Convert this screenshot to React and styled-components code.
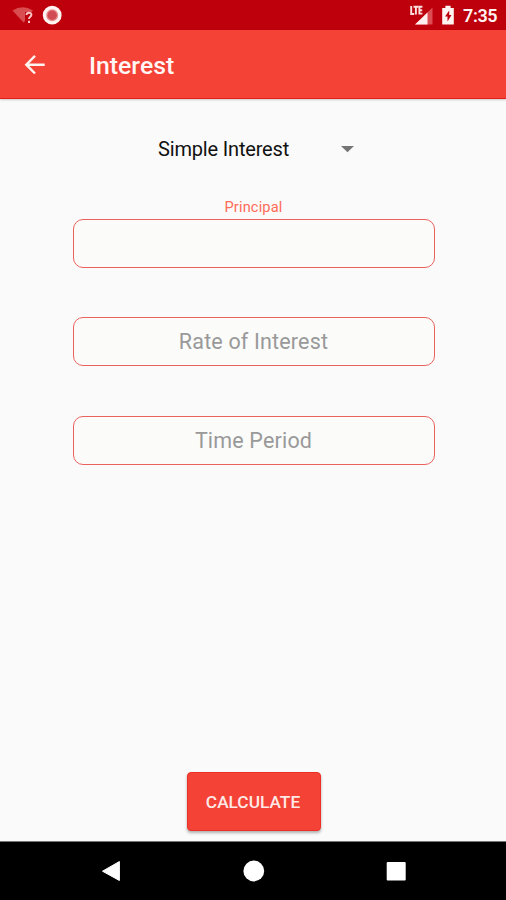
import React from 'react';
import styled, { createGlobalStyle } from 'styled-components';

const GlobalStyle = createGlobalStyle`
  * { box-sizing: border-box; }
  body { margin: 0; background: #fafafa; font-family: Roboto, "Liberation Sans", sans-serif; }
`;

const Screen = styled.div`
  display: flex;
  flex-direction: column;
  width: 506px;
  height: 900px;
  overflow: hidden;
  background: #fafafa;
`;

const StatusBar = styled.header`
  display: flex;
  justify-content: space-between;
  flex: 0 0 30px;
  background: #bd000c;
`;

const StatusGroup = styled.div`
  display: flex;
  height: 30px;
`;

const Clock = styled.span`
  width: 43px;
  color: #fff3f2;
  font-size: 18px;
  font-weight: 600;
  line-height: 32px;
  letter-spacing: -0.4px;
  white-space: nowrap;
`;

const AppBar = styled.div`
  display: flex;
  align-items: center;
  flex: 0 0 69px;
  padding: 2px 0 0 22px;
  background: #f44336;
  border-bottom: 1px solid #e01e17;
  box-shadow: 0 1px 2px rgba(0, 0, 0, 0.2);
  z-index: 1;
`;

const BackButton = styled.button`
  display: flex;
  width: 67px;
  padding: 0;
  border: 0;
  background: none;
`;

const Title = styled.h1`
  margin: 2px 0 0;
  color: #fff6f5;
  font-size: 24.8px;
  font-weight: 500;
  line-height: 32px;
`;

const Form = styled.main`
  display: flex;
  flex-direction: column;
  align-items: center;
  flex: 1;
`;

const Picker = styled.div`
  display: flex;
  align-items: center;
  justify-content: space-between;
  width: 196px;
  height: 30px;
  margin: 35px 0 0 6px;
  color: #111;
  font-size: 20px;
  letter-spacing: -0.17px;
  white-space: nowrap;
`;

const Field = styled.label`
  display: flex;
  flex-direction: column;
  width: 362px;
  height: 98.3px;
`;

const Fields = styled.div`
  padding: 34px 0 0 1px;
`;

const Label = styled.span`
  height: 21px;
  color: #ff6b57;
  font-size: 14.6px;
  line-height: 18px;
  letter-spacing: 0.15px;
  text-align: center;
`;

const Input = styled.input`
  width: 100%;
  height: 49px;
  padding: 0;
  border: 1.4px solid #eb625d;
  border-radius: 10px;
  outline: 0;
  background: #fbfbfa;
  font: 21.5px Roboto, "Liberation Sans", sans-serif;
  letter-spacing: 0.17px;
  text-align: center;

  &::placeholder { color: #999; opacity: 1; }
`;

const Calculate = styled.button`
  width: 134px;
  height: 59px;
  margin: auto 0 10px 1px;
  padding: 1px 1px 0 0;
  border: 1px solid #ed2f25;
  border-radius: 4px;
  background: #f44336;
  box-shadow: 0 2px 3px rgba(0, 0, 0, 0.3);
  color: #ffe9e6;
  font: 500 17.3px Roboto, "Liberation Sans", sans-serif;
`;

const NavBar = styled.nav`
  display: flex;
  justify-content: space-between;
  flex: 0 0 59px;
  padding: 15px 96px 0 97px;
  border-top: 1px solid #777;
  background: #000;
`;

const NavButton = styled.button`
  display: flex;
  width: 28px;
  height: 28px;
  padding: 0;
  border: 0;
  background: none;
`;

const shapes = {
  back: <path d="M5.5 14.2 22.4 4.5v19Z" fill="#fff" stroke="#fff" strokeWidth="1" strokeLinejoin="round" />,
  home: <circle cx="13.8" cy="14" r="10.4" fill="#fff" />,
  recent: <rect x="4.7" y="5" width="19" height="18.5" rx="1" fill="#fff" />,
};

export default function App() {
  return (
    <>
      <GlobalStyle />
      <Screen>
        <StatusBar>
          <StatusGroup>
            <svg width="66" height="30" viewBox="0 0 66 30">
              <path d="M12.5 10.5Q22.5 4 33 10.5L31.5 12H25v9l-1.5 1.5Z" fill="#d94c50" />
              <path d="M26.5 15c.2-3 5-2.8 4.9-.2 0 2-2.4 2-2.4 4.2M29 20.8v2.2" fill="none" stroke="#f6c5c4" strokeWidth="2" />
              <circle cx="52.2" cy="15.2" r="7.7" fill="#e88c8f" stroke="#fff4f2" strokeWidth="3.4" />
              <circle cx="52.2" cy="15.2" r="4.7" fill="#d14a54" />
            </svg>
          </StatusGroup>
          <StatusGroup>
            <svg width="53" height="30" viewBox="0 0 53 30">
              <path d="M22.5 7.5v17H5Z" fill="#db4d53" />
              <path d="M17.5 12.5v12H5Z" fill="#fff0ef" />
              <path d="M1.2 6v8h3M3.5 6.8h4.8M5.9 6.8v7.6M12.4 6.8H9.4v6.8h3M9.4 10.2h2.8" fill="none" stroke="#fbdedd" strokeWidth="1.9" />
              <path d="M32.2 8h3.2V5.7h5.2V8h3.2v16.5H32.2Z" fill="#fff4f2" />
              <path d="m39.2 10.5-4.2 6H37.5v5l4-6.5H39.2Z" fill="#bd000c" />
            </svg>
            <Clock>7:35</Clock>
          </StatusGroup>
        </StatusBar>
        <AppBar>
          <BackButton aria-label="Back">
            <svg width="26" height="26" viewBox="0 0 26 26">
              <path d="M22.7 12.7H4.5M13 3.9 4.3 12.7 13 21.5" fill="none" stroke="#fff3ef" strokeWidth="2.4" />
            </svg>
          </BackButton>
          <Title>Interest</Title>
        </AppBar>
        <Form>
          <Picker>
            Simple Interest
            <svg width="13" height="8" viewBox="0 0 13 8">
              <path d="M0 1h13L6.5 7.3Z" fill="#757575" />
            </svg>
          </Picker>
          <Fields>
            <Field><Label>Principal</Label><Input aria-label="Principal" /></Field>
            <Field><Label /><Input placeholder="Rate of Interest" /></Field>
            <Field><Label /><Input placeholder="Time Period" /></Field>
          </Fields>
          <Calculate>CALCULATE</Calculate>
        </Form>
        <NavBar>
          {Object.entries(shapes).map(([name, shape]) => (
            <NavButton key={name} aria-label={name}>
              <svg width="28" height="28" viewBox="0 0 28 28">{shape}</svg>
            </NavButton>
          ))}
        </NavBar>
      </Screen>
    </>
  );
}
